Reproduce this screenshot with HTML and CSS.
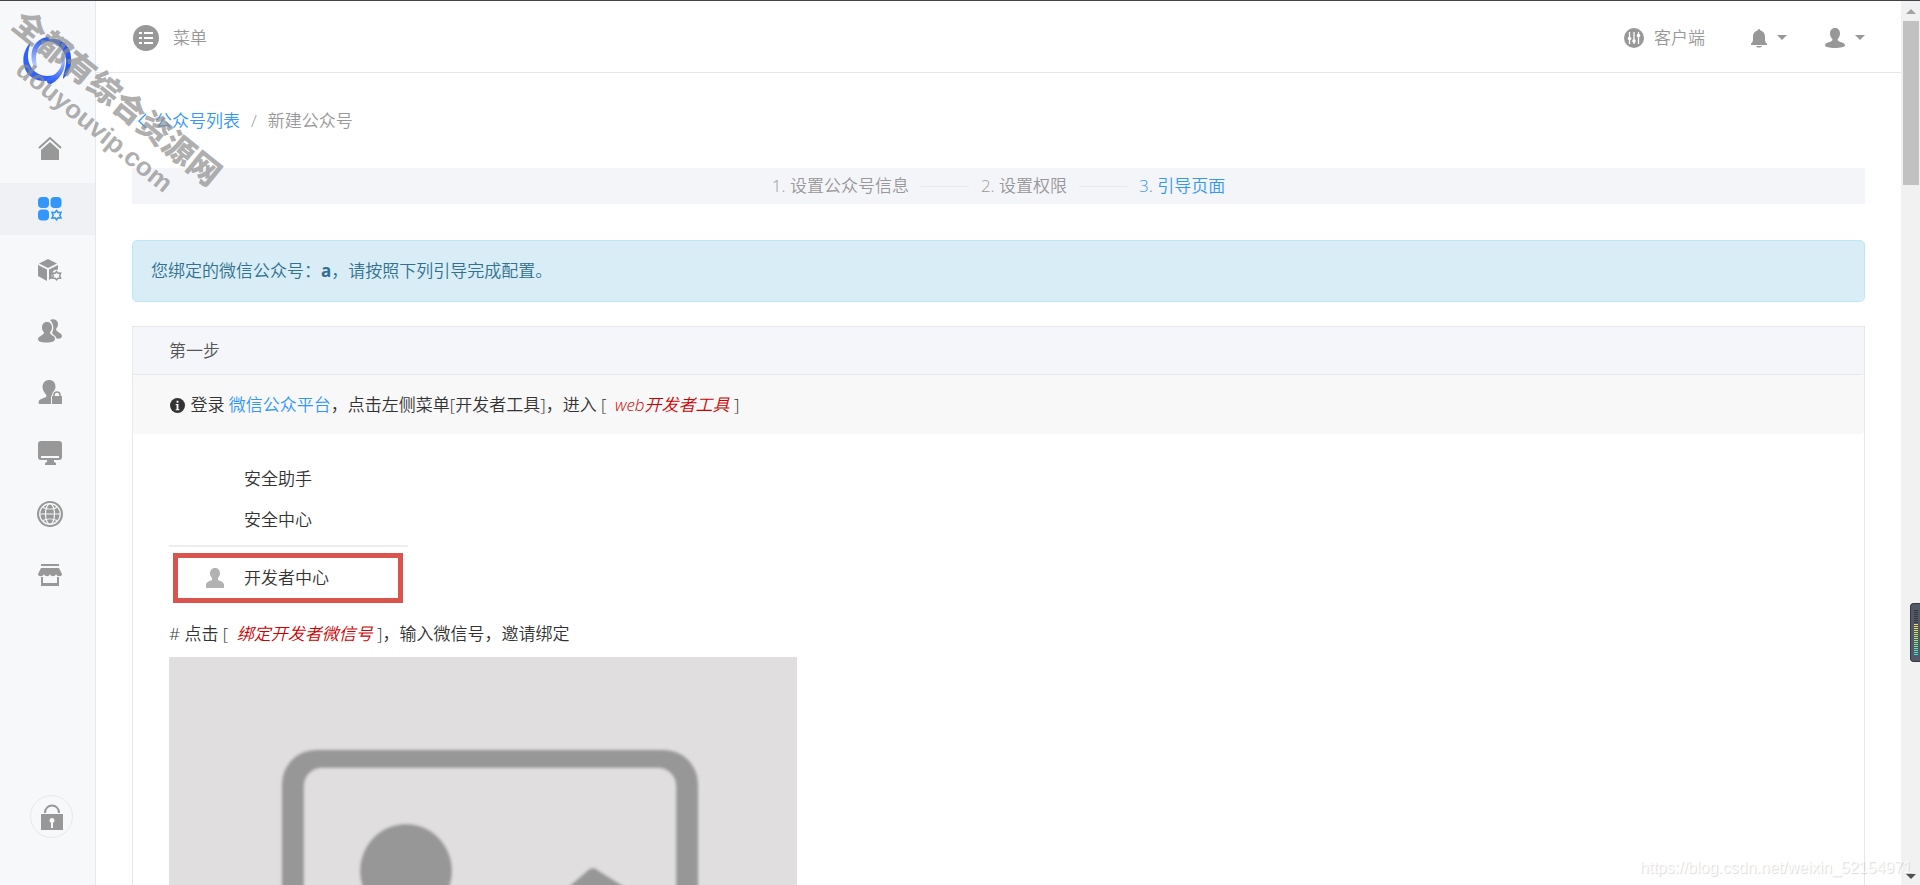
FILE: index.html
```html
<!DOCTYPE html>
<html lang="zh-CN">
<head>
<meta charset="utf-8">
<title>新建公众号</title>
<link rel="stylesheet" href="styles.css">
</head>
<body>
<div class="app">
  <aside class="sidebar">
    <a class="logo" href="#" aria-label="首页">
      <svg width="50" height="50" viewBox="0 0 50 50">
        <defs>
          <linearGradient id="fade-down" x1="0" y1="0" x2="0" y2="1">
            <stop offset="0" stop-color="#2456f5"/>
            <stop offset="1" stop-color="#c9d8ff"/>
          </linearGradient>
          <linearGradient id="fade-up" x1="0" y1="1" x2="0" y2="0">
            <stop offset="0" stop-color="#2456f5"/>
            <stop offset="1" stop-color="#c9d8ff"/>
          </linearGradient>
        </defs>
        <path d="M8 6C-3 17-2 35 10 42c8 5 19 4 24-4-10 4-20 2-26-7C3 23 5 14 8 6Z" fill="#2f62f8"/>
        <path d="M24 1C10 4 5 17 11 32c3 0 3 0 3-2-3-13 1-22 11-25 3-2 1-4-1-4Z" fill="url(#fade-down)"/>
        <path d="M22 5C34-1 48 7 48 22c1 8-2 15-8 21 0-5 4-13 3-20C41 12 33 5 22 5Z" fill="#2456f5"/>
        <path d="M37 17c5 11 0 20-13 26-1 3 1 5 4 5 12-6 17-20 12-31Z" fill="url(#fade-up)"/>
      </svg>
    </a>
    <nav class="side-nav" aria-label="主导航">
      <a href="#" aria-label="首页"><svg width="24" height="24" viewBox="0 0 24 24"><path d="M1 12 12 2l11 10" fill="none" stroke="currentColor" stroke-width="2"/><path d="m12 6 9 8v10H3V14Z"/></svg></a>
      <a class="active" href="#" aria-label="平台"><svg width="24" height="24" viewBox="0 0 24 24"><rect width="11" height="11" rx="4"/><rect x="12.500" width="11" height="11" rx="4"/><rect y="12.500" width="11" height="11" rx="4"/><path d="m18.500 13.500 1.500 2 3-.2-1.200 2.900 1.200 2.800-3-.2-1.500 2-1.500-2-3 .2 1.200-2.800-1.200-2.900 3 .2Z" fill="none" stroke="currentColor" stroke-width="1.600"/></svg></a>
      <a href="#" aria-label="应用"><svg width="24" height="24" viewBox="0 0 24 24"><path d="m10 1 9 4.500-9 4.500L1 5.500Z"/><path d="m0 7 9 4.500V23l-9-5Z"/><path d="m11 11.500 9-4.500v4.500c-5 0-7 3-6 8.500l-3 2Z"/><path d="m18.500 13.500 1.400 1.700 2.700-.1-.9 2.600.9 2.600-2.700-.1-1.400 1.700-1.400-1.700-2.700.1.900-2.600-.9-2.600 2.700.1Z" fill="none" stroke="currentColor" stroke-width="1.500"/></svg></a>
      <a href="#" aria-label="用户"><svg width="24" height="24" viewBox="0 0 24 24"><path d="M9 3c3 0 5 2 5 5.500 0 2-1 3.500-2 5 0 3 5 3 5 6 0 3-3 4-8.500 4S0 22.500 0 20c0-3 6-3.500 6-6.500-1-1-2-3-2-5C4 5 6 3 9 3Z"/><path d="M12 1c3-2 8-.5 8 4 0 2-1 4-2 5 0 3 6 4 6 7 0 2-2 3-5.500 2.500C18 17 15 16 14 14c2-4 2-9-2-13Z"/></svg></a>
      <a href="#" aria-label="权限"><svg width="24" height="24" viewBox="0 0 24 24"><path d="M11 0c4 0 6.500 2.500 6.500 7 0 2-1.500 4-3 6 0 3-1.500 2-1.500 5v6H1c-2-5 4-5 7-7 2-2-3-4-3.500-9.500C4.500 3 7 0 11 0Z"/><path d="M14 16h10v8H14Z"/><path d="M16 17v-2c0-4 6-4 6 0v2" fill="none" stroke="currentColor" stroke-width="1.600"/></svg></a>
      <a href="#" aria-label="系统"><svg width="24" height="24" viewBox="0 0 24 24"><path fill-rule="evenodd" d="M3 0h18a3 3 0 0 1 3 3v13a3 3 0 0 1-3 3h-5v2l2 1v2H7v-2l2-1v-2H3a3 3 0 0 1-3-3V3a3 3 0 0 1 3-3Zm0 15v2h18v-2Z"/></svg></a>
      <a href="#" aria-label="站点"><svg width="26" height="26" viewBox="0 0 26 26"><circle cx="13" cy="13" r="13"/><g fill="none" stroke="#f6f8fa" stroke-width="1.200"><circle cx="13" cy="13" r="10.300"/><ellipse cx="13" cy="13" rx="4.500" ry="10.300"/><path d="M2.700 13h20.600M6 6.500c4 2 10 2 14 0M6 19.500c4-2 10-2 14 0"/></g></svg></a>
      <a href="#" aria-label="商店"><svg width="24" height="24" viewBox="0 0 24 24"><path d="M3 1h18v2H3ZM3 5h18l3 6c0 3-5 3-6 0-1 3-5 3-6 0-1 3-5 3-6 0-1 3-6 3-6 0ZM3 14h2v6h14v-6h2v9H3Z"/></svg></a>
    </nav>
    <button class="lock" type="button" aria-label="锁定"><svg width="22" height="26" viewBox="0 0 22 26"><path d="M4 9C4-1 18-1 18 9" fill="none" stroke="currentColor" stroke-width="2"/><path fill-rule="evenodd" d="M0 10h22v16H0Zm11 4a2.500 2.500 0 0 0-1 4.800V24h2v-5.200A2.500 2.500 0 0 0 11 14Z"/></svg></button>
  </aside>

  <div class="main">
    <header class="topbar">
      <button class="tool menu" type="button">
        <svg width="26" height="26" viewBox="0 0 26 26"><circle cx="13" cy="13" r="13"/><path d="M6 8h3m2 0h9M6 13h3m2 0h9M6 18h3m2 0h9" stroke="#fff" stroke-width="2"/></svg>
        <span>菜单</span>
      </button>
      <div class="tools">
        <button class="tool client" type="button">
          <svg width="20" height="20" viewBox="0 0 20 20"><circle cx="10" cy="10" r="10"/><path d="M5.500 4v12M10 4v12M14.500 4v12" stroke="#fff" stroke-width="1.300"/><circle cx="5.500" cy="10.500" r="1.800" fill="#fff"/><circle cx="10" cy="13" r="1.800" fill="#fff"/><circle cx="14.500" cy="7.500" r="1.800" fill="#fff"/></svg>
          <span>客户端</span>
        </button>
        <button class="tool" type="button" aria-label="消息">
          <svg width="16" height="20" viewBox="0 0 16 20"><path d="M8 1c1 0 1 1 1.500 1.500C13 3.500 14 6 14 9c0 4 0 5 2 6.500V17H0v-1.500C2 14 2 13 2 9c0-3 1-5.500 4.500-6.500C7 2 7 1 8 1ZM5 18h6c-1 2-5 2-6 0Z"/></svg>
          <i class="caret"></i>
        </button>
        <button class="tool" type="button" aria-label="账户">
          <svg width="20" height="20" viewBox="0 0 20 20"><path d="M10 0c3.500 0 5 2.500 5 5.500 0 3-1.500 4-2.500 6 0 3 7.500 2 7.500 6C20 19 15 20 10 20S0 19 0 17.500c0-4 7.500-3 7.500-6C6.500 9.500 5 8.500 5 5.500 5 2.500 6.500 0 10 0Z"/></svg>
          <i class="caret"></i>
        </button>
      </div>
    </header>

    <main class="content">
      <nav class="crumbs" aria-label="位置">
        <a href="#"><svg width="9" height="16" viewBox="0 0 9 16"><path d="M8 1 1 8l7 7" fill="none" stroke="currentColor" stroke-width="1.300"/></svg>公众号列表</a>
        <span>/</span>
        <span>新建公众号</span>
      </nav>

      <ol class="steps">
        <li>1. 设置公众号信息</li>
        <li>2. 设置权限</li>
        <li class="current">3. 引导页面</li>
      </ol>

      <p class="alert">您绑定的微信公众号：<b>a</b>，请按照下列引导完成配置。</p>

      <section class="panel">
        <h2>第一步</h2>
        <p class="lead"><svg width="15" height="15" viewBox="0 0 16 16"><circle cx="8" cy="8" r="8"/><path d="M7 3h2v2H7ZM6 6.500h3V12h1v1H6v-1h1V7.500H6Z" fill="#f8f8f8"/></svg> 登录 <a href="#">微信公众平台</a>，点击左侧菜单[开发者工具]，进入 [ <em>web开发者工具</em> ]</p>
        <div class="body">
          <div class="sample">
            <p>安全助手</p>
            <p>安全中心</p>
            <div class="marked">
              <svg width="18" height="20" viewBox="0 0 18 20"><path d="M9 0c3.500 0 5 2.500 5 5.500 0 2-1 3-2 4.500v2c2 1 6 2 6 5v3H0v-3c0-3 4-4 6-5v-2C5 8.500 4 7.500 4 5.500 4 2.500 5.500 0 9 0Z"/></svg>
              <span>开发者中心</span>
            </div>
          </div>
          <p class="note"># 点击 [ <em>绑定开发者微信号</em> ]，输入微信号，邀请绑定</p>
          <svg class="placeholder" width="628" height="440" viewBox="0 0 628 440" role="img" aria-label="示意图">
            <defs><filter id="soft"><feGaussianBlur stdDeviation="1.500"/></filter></defs>
            <rect width="628" height="440" fill="#e0dedf"/>
            <g filter="url(#soft)">
              <rect x="113" y="93" width="416" height="320" rx="34" fill="#979797"/>
              <rect x="135" y="111" width="372" height="284" rx="18" fill="#e0dedf"/>
              <ellipse cx="237" cy="214" rx="46" ry="47" fill="#979797"/>
              <path d="M330 290 418 214q6-6 12 0l77 48v100H150Z" fill="#979797"/>
            </g>
          </svg>
        </div>
      </section>
    </main>
  </div>

  <div class="scroll" aria-hidden="true">
    <i class="arrow up"></i>
    <i class="thumb"></i>
    <i class="arrow down"></i>
    <div class="meter"><i class="level"></i></div>
  </div>

  <div class="watermark"><div class="name">全都有综合资源网</div><div class="site">douyouvip.com</div></div>
  <div class="source">https://blog.csdn.net/weixin_52154971</div>
</div>
</body>
</html>
```
FILE: styles.css
```css
* {
  box-sizing: border-box;
}

body {
  margin: 0;
  background: #fff;
  color: #333;
  font: 350 17px/24px "Open Sans", "Noto Sans CJK SC", sans-serif;
}

p,
h2,
ol {
  margin: 0;
  padding: 0;
}

a {
  color: #3296fa;
  text-decoration: none;
}

em {
  margin-left: 4px;
  color: #c00;
}

svg {
  flex: none;
  fill: currentColor;
}

.app {
  position: relative;
  display: flex;
  height: 100vh;
  overflow: hidden;
  border-top: 1px solid #44434a;
}

.sidebar {
  display: flex;
  flex: none;
  flex-direction: column;
  align-items: center;
  width: 96px;
  padding: 35px 0 47px;
  border-right: 1px solid #e7e8eb;
  background: #f6f8fa;
}

.logo {
  height: 50px;
}

.side-nav {
  display: flex;
  flex-direction: column;
  gap: 9px;
  align-self: stretch;
  margin-top: 36px;
}

.side-nav a {
  display: flex;
  align-items: center;
  justify-content: center;
  height: 52px;
  padding-left: 5px;
  color: #989898;
}

.side-nav .active {
  background: #eff1f5;
  color: #3296fa;
}

.lock {
  display: flex;
  align-items: center;
  justify-content: center;
  width: 43px;
  height: 43px;
  margin: auto 0 0 8px;
  padding: 0;
  border: 1px solid #e7e8eb;
  border-radius: 50%;
  background: none;
  color: #989898;
}

.main {
  flex: 1;
  min-width: 0;
}

.topbar {
  display: flex;
  align-items: center;
  justify-content: space-between;
  height: 72px;
  padding: 2px 36px 0 37px;
  border-bottom: 1px solid #e7e8eb;
}

.tools {
  display: flex;
  gap: 38px;
}

.tool {
  display: flex;
  align-items: center;
  gap: 10px;
  padding: 0;
  border: 0;
  background: none;
  color: #989898;
  font: inherit;
}

.menu {
  gap: 14px;
}

.client {
  margin-right: 8px;
}

.caret {
  border: 5px solid transparent;
  border-top-color: currentColor;
  border-bottom: 0;
}

.content {
  padding: 36px;
}

.crumbs {
  display: flex;
  gap: 11px;
  padding-left: 6px;
  color: #989898;
}

.crumbs a {
  display: flex;
  align-items: center;
  gap: 8px;
}

.steps {
  display: flex;
  align-items: center;
  justify-content: center;
  height: 36px;
  margin: 35px 0 36px;
  background: #f4f5f9;
  color: #989898;
  list-style: none;
}

.steps li {
  display: flex;
  align-items: center;
}

.steps li + li::before {
  content: "";
  width: 48px;
  height: 1px;
  margin: 0 12px;
  background: #e7e8eb;
}

.steps .current {
  color: #3296fa;
}

.alert {
  padding: 18px;
  border: 1px solid #bce8f1;
  border-radius: 5px;
  background: #d9edf7;
  color: #31708f;
}

.alert b {
  font-weight: 700;
}

.panel {
  margin-top: 24px;
  border: 1px solid #e7e8eb;
}

.panel h2 {
  padding: 12px 36px 11px;
  border-bottom: 1px solid #e7e8eb;
  background: #f4f6fa;
  color: #555;
  font: inherit;
}

.lead {
  padding: 18px 36px 17px;
  border-radius: 4px;
  background: #f8f8f8;
}

.lead svg {
  margin: 0 1px;
  vertical-align: -2px;
}

.body {
  padding: 33px 36px;
}

.sample {
  width: 239px;
}

.sample p {
  padding: 0 0 17px 75px;
}

.marked {
  position: relative;
  display: flex;
  align-items: center;
  gap: 20px;
  height: 50px;
  margin: 4px 5px 0 4px;
  padding-left: 28px;
  border: 5px solid #d9534f;
}

.marked::before {
  content: "";
  position: absolute;
  top: -13px;
  left: -9px;
  width: 239px;
  height: 2px;
  background: #eee;
}

.marked svg {
  color: #b2b2b2;
}

.note {
  margin: 19px 0 11px;
}

.placeholder {
  display: block;
}

.scroll {
  position: relative;
  display: flex;
  flex: none;
  flex-direction: column;
  align-items: center;
  width: 19px;
  padding: 8px 0 6px;
  background: #f1f1f1;
}

.arrow {
  border: 5px solid transparent;
}

.up {
  border-top: 0;
  border-bottom-color: #a3a3a3;
}

.down {
  margin-top: auto;
  border-bottom: 0;
  border-top-color: #505050;
}

.thumb {
  width: 16px;
  height: 164px;
  margin-top: 7px;
  background: #c1c1c1;
}

.meter {
  position: absolute;
  top: 602px;
  right: 0;
  width: 10px;
  height: 59px;
  padding: 6px 2px 6px 3px;
  border: 1px solid #34373f;
  border-right: 0;
  border-radius: 4px 0 0 4px;
  background: #535866;
}

.level {
  display: block;
  height: 100%;
  background:
    repeating-linear-gradient(transparent 0 1px, #535866 1px 2px),
    linear-gradient(#34373f 0 30%, #ffd04a 30%, #c8e860 50%, #8aee88 70%, #3ee0e0);
}

.watermark {
  position: absolute;
  top: 75px;
  left: -22px;
  width: 256px;
  color: rgba(140, 140, 140, 0.7);
  font-weight: 900;
  line-height: 36px;
  text-align: center;
  white-space: nowrap;
  transform: rotate(39deg);
  pointer-events: none;
}

.name {
  font-size: 32px;
}

.site {
  font-family: "Liberation Sans", sans-serif;
  font-size: 26px;
}

.source {
  position: absolute;
  right: 8px;
  bottom: 5px;
  color: rgba(255, 255, 255, 0.9);
  font: 400 16px/24px "Liberation Sans", sans-serif;
  text-shadow: 1px 1px 1px rgba(0, 0, 0, 0.15);
}
```
